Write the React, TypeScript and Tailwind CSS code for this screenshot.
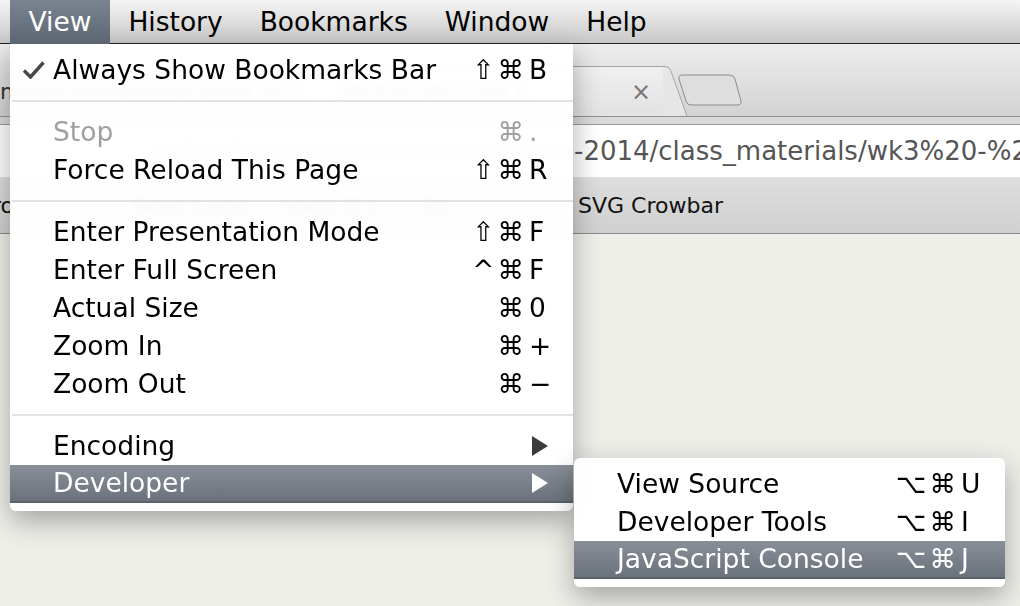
import React from 'react'

type Item = {
  label?: string
  mods?: string
  keyChar?: string
  disabled?: boolean
  checked?: boolean
  submenu?: boolean
  active?: boolean
  sep?: boolean
}

const viewMenu: Item[] = [
  { label: 'Always Show Bookmarks Bar', mods: '⇧⌘', keyChar: 'B', checked: true },
  { sep: true },
  { label: 'Stop', mods: '⌘', keyChar: '.', disabled: true },
  { label: 'Force Reload This Page', mods: '⇧⌘', keyChar: 'R' },
  { sep: true },
  { label: 'Enter Presentation Mode', mods: '⇧⌘', keyChar: 'F' },
  { label: 'Enter Full Screen', mods: '^⌘', keyChar: 'F' },
  { label: 'Actual Size', mods: '⌘', keyChar: '0' },
  { label: 'Zoom In', mods: '⌘', keyChar: '+' },
  { label: 'Zoom Out', mods: '⌘', keyChar: '−' },
  { sep: true },
  { label: 'Encoding', submenu: true },
  { label: 'Developer', submenu: true, active: true },
]

const developerMenu: Item[] = [
  { label: 'View Source', mods: '⌥⌘', keyChar: 'U' },
  { label: 'Developer Tools', mods: '⌥⌘', keyChar: 'I' },
  { label: 'JavaScript Console', mods: '⌥⌘', keyChar: 'J', active: true },
]

const menus = ['View', 'History', 'Bookmarks', 'Window', 'Help']

function Arrow({ white }: { white?: boolean }) {
  return (
    <svg width="16" height="20" viewBox="0 0 16 20" className="ml-[3px]">
      <path d="M0 0 L16 10 L0 20 Z" fill={white ? '#ffffff' : '#3b3b3b'} />
    </svg>
  )
}

function Check() {
  return (
    <svg width="24" height="18" viewBox="0 0 24 18">
      <path d="M2 9.5 L8.5 16 L21.5 1.5" fill="none" stroke="#474747" strokeWidth="3.4" />
    </svg>
  )
}

function MenuRow({ item }: { item: Item }) {
  if (item.sep) {
    return (
      <div className="flex h-[24px] items-center pl-[2px]">
        <div className="h-[2px] w-full bg-[#e2e2e2]" />
      </div>
    )
  }
  const color = item.active
    ? 'bg-linear-to-b from-[#898f98] to-[#6a727c] border-b-2 border-[#5a626c] text-white'
    : item.disabled
      ? 'text-[#a0a0a0]'
      : 'text-black'
  return (
    <div className={`flex h-[38px] items-center pl-[12px] whitespace-nowrap ${color}`}>
      <span className="flex w-[31px] items-center">{item.checked ? <Check /> : null}</span>
      <span className="flex-1">{item.label}</span>
      <span className="w-[80px] text-right tracking-[3px]">{item.mods}</span>
      <span className="flex w-[46px] items-center pl-[2px]">
        {item.submenu ? <Arrow white={item.active} /> : item.keyChar}
      </span>
    </div>
  )
}

export default function App() {
  return (
    <div className="relative h-[606px] w-[1020px] overflow-hidden bg-[#efefea] font-['DejaVu_Sans',sans-serif] text-[26.5px]">
      {/* system menu bar */}
      <div className="flex h-[44px] border-b border-[#222] bg-linear-to-b from-[#f5f5f5] to-[#c8c8c8] pl-[10px]">
        {menus.map((m) => (
          <div
            key={m}
            className={`flex items-center px-[18.5px] ${
              m === 'View'
                ? 'relative z-10 h-[44px] self-start bg-linear-to-b from-[#7a8591] to-[#5b6672] text-white'
                : 'text-black'
            }`}
          >
            {m}
          </div>
        ))}
      </div>

      {/* browser chrome behind the menu */}
      <div className="flex h-[73px] items-end border-b border-[#8f8f8f] bg-linear-to-b from-[#ededed] to-[#d3d3d3] text-[22px] text-[#333]">
        <div className="flex h-[50px] w-[300px] items-center overflow-hidden whitespace-nowrap">
          mmer-Immersive-2014 (s
        </div>
        <div className="flex h-[50px] w-[363px] items-center rounded-tl-[8px] border-t border-l border-[#a3a3a3] bg-linear-to-b from-[#f0f0f0] to-[#e2e2e2] pl-[38px] pr-[12px]">
          <span className="flex-1 whitespace-nowrap">JavaScript: Day 1</span>
          <span className="text-[24px] text-[#777]">×</span>
        </div>
        <svg width="24" height="50" viewBox="0 0 24 50" className="block">
          <path d="M0 0.5 C6 0.5 7 2 9 8 L24 50 L0 50 Z" fill="#e6e6e6" />
          <path d="M0 0.5 C6 0.5 7 2 9 8 L24 50" fill="none" stroke="#a3a3a3" />
        </svg>
        <svg width="66" height="32" viewBox="0 0 66 32" className="mb-[10px] ml-[-10px] block">
          <path
            d="M6 1 L52 1 Q57 1 58 5 L64 27 Q65 31 60 31 L14 31 Q10 31 9 27 L2 5 Q1 1 6 1 Z"
            fill="#dedede"
            stroke="#8c8c8c"
          />
        </svg>
      </div>
      <div className="h-[7px] bg-[#dadada]" />
      <div className="flex h-[53px] items-center border-t border-[#9a9a9a] bg-white text-[26px] text-[#555] whitespace-nowrap">
        <div className="flex w-[574px] shrink-0 justify-end overflow-hidden">calhost/~jen/summer-Immersive</div>
        <span>-2014/class_materials/wk3%20-%20d3</span>
      </div>
      <div className="flex h-[57px] items-center border-b border-[#8a8a8a] bg-linear-to-b from-[#dedede] to-[#d0d0d0] text-[22px] text-[#111] whitespace-nowrap">
        <div className="flex w-[578px] shrink-0 items-center overflow-hidden">
          <span className="ml-[-8px] w-[140px]">ro</span>
          <span className="w-[150px]">Read Later</span>
          <span className="w-[140px]">learn D3</span>
          <span>Ru</span>
        </div>
        <span>SVG Crowbar</span>
      </div>

      {/* View dropdown */}
      <div className="absolute left-[10px] top-[44px] w-[563px] rounded-b-[6px] bg-white/[0.97] pt-[7px] pb-[8px] shadow-[0_10px_28px_rgba(0,0,0,0.32)] backdrop-blur-[3px]">
        {viewMenu.map((item, i) => (
          <MenuRow key={i} item={item} />
        ))}
      </div>

      {/* Developer submenu */}
      <div className="absolute left-[574px] top-[458px] w-[431px] rounded-[6px] bg-white/[0.97] pt-[7px] pb-[8px] shadow-[0_10px_28px_rgba(0,0,0,0.32)]">
        {developerMenu.map((item, i) => (
          <MenuRow key={i} item={item} />
        ))}
      </div>
    </div>
  )
}
